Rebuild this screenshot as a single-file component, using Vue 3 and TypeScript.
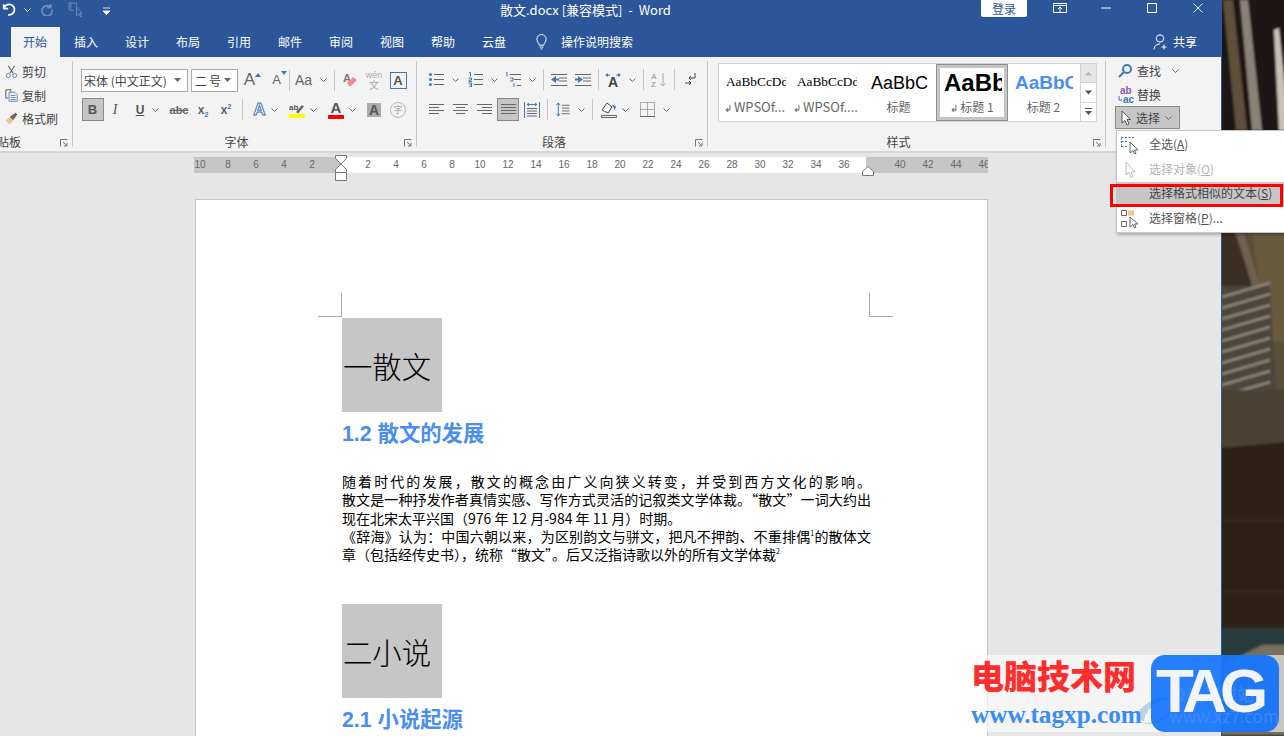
<template>
  <div class="screen">
    <div class="window">
      <!-- title bar -->
      <header class="titlebar">
        <div class="qat">
          <svg class="ic-undo" viewBox="0 0 16 14"><path d="M2 1v5h5M2.4 5.600A6 6 0 1 1 7 13" /></svg>
          <svg class="chev light qat-chev" viewBox="0 0 7 4"><path d="M.5.5l3 3 3-3" /></svg>
          <svg class="ic-redo" viewBox="0 0 14 14"><path d="M11 1v4H7M11 4.500A5.500 5.500 0 1 0 12.400 7" /></svg>
          <svg class="ic-touch" viewBox="0 0 17 17">
            <path d="M1 9V1h8v3M3 1v8h3" />
            <path class="fill" d="M9 5v10l2.500-2.500 2 3.500 1-.6-2-3.400H15z" />
          </svg>
          <svg class="ic-custom" viewBox="0 0 7 8"><path d="M0 1h7M0 4h7L3.500 7.500z" /></svg>
        </div>
        <div class="doc-title">散文.docx [兼容模式]&nbsp; -&nbsp; Word</div>
        <div class="win-ctrl">
          <button class="login">登录</button>
          <svg class="ctl first" viewBox="0 0 14 10"><path d="M.5.5h13v9H.5zM.5 2.500h13M7 9V4.500M5 6l2-2 2 2" /></svg>
          <svg class="ctl" viewBox="0 0 14 10"><path d="M2 5h10" /></svg>
          <svg class="ctl" viewBox="0 0 14 10"><path d="M2.500.5h9v9h-9z" /></svg>
          <svg class="ctl" viewBox="0 0 14 12"><path d="M1.500.5l11 11M12.500.5l-11 11" /></svg>
        </div>
      </header>

      <!-- tabs -->
      <nav class="tabs">
        <span v-for="(t, i) in tabs" :key="t" class="tab" :class="{ active: i === 0 }">{{ t }}</span>
        <svg class="bulb" viewBox="0 0 14 17"><path d="M4.500 12.500C4.500 10 2 9 2 6a5 5 0 0 1 10 0c0 3-2.500 4-2.500 6.500zM5 14.500h4M6 16.500h2" /></svg>
        <span class="search">操作说明搜索</span>
        <span class="share">
          <svg viewBox="0 0 16 17"><circle cx="7" cy="5" r="3.700" /><path d="M1 16c.5-4 3-5.500 6-5.500M11 11v5M8.500 13.500h5" /></svg>
          共享
        </span>
      </nav>

      <!-- ribbon -->
      <section class="ribbon">
        <div class="group g-clip">
          <div class="clip-row">
            <svg class="ic" viewBox="0 0 16 16">
              <path class="st-g" d="M4 1l6 9M12 1L6 10" />
              <circle class="st-b" cx="4" cy="13" r="2.500" /><circle class="st-b" cx="12" cy="13" r="2.500" />
            </svg>
            剪切
          </div>
          <div class="clip-row">
            <svg class="ic" viewBox="0 0 16 16">
              <path class="st-g" d="M1 1h6v2M1 1v10h3" />
              <path class="st-b" d="M5 4h7l3 3v8H5zM7 8h6M7 10.500h6M7 13h6" />
            </svg>
            复制
          </div>
          <div class="clip-row">
            <svg class="ic" viewBox="0 0 16 16">
              <path d="M1 10l5-4 4 5-4 4-2-1z" fill="#eec48a" />
              <path d="M6 6l7-5 2 2-5 7z" fill="#666" />
            </svg>
            格式刷
          </div>
          <div class="label clip-label">剪贴板</div>
          <svg class="launcher" viewBox="0 0 8 8"><path d="M.5 7.500v-7h7M3 3l4 4M7 4v3H4" /></svg>
        </div>

        <div class="group g-font">
          <div class="rows">
            <div class="row font-r1">
              <div class="select sel-font">宋体 (中文正文)<svg class="chev tri" viewBox="0 0 7 4"><path d="M0 0h7L3.500 4z" /></svg></div>
              <div class="select sel-size">二号<svg class="chev tri" viewBox="0 0 7 4"><path d="M0 0h7L3.500 4z" /></svg></div>
              <span class="glyph big">A<svg class="mini" viewBox="0 0 6 4"><path d="M3 0l3 4H0z" /></svg></span>
              <span class="glyph small">A<svg class="mini" viewBox="0 0 6 4"><path d="M0 0h6L3 4z" /></svg></span>
              <i class="sep" />
              <span class="drop"><span class="glyph aa">Aa</span><svg class="chev" viewBox="0 0 7 4"><path d="M.5.5l3 3 3-3" /></svg></span>
              <i class="sep" />
              <svg class="ic-16" viewBox="0 0 16 16">
                <text x="1" y="10" class="t-ic gray">A</text>
                <path d="M5 11l6-6 4 3-6 6H7z" fill="#ee8a98" />
              </svg>
              <span class="wen">wén<b>文</b></span>
              <span class="a-box">A</span>
            </div>
            <div class="row font-r2">
              <span class="toggle on fmt-b">B</span>
              <span class="fmt-i">I</span>
              <span class="drop"><span class="fmt-u">U</span><svg class="chev" viewBox="0 0 7 4"><path d="M.5.5l3 3 3-3" /></svg></span>
              <span class="fmt-s">abc</span>
              <span class="fmt-x">x<sub>2</sub></span>
              <span class="fmt-x">x<sup>2</sup></span>
              <i class="sep" />
              <span class="drop gap-5"><span class="glow">A</span><svg class="chev" viewBox="0 0 7 4"><path d="M.5.5l3 3 3-3" /></svg></span>
              <span class="drop gap-5">
                <svg class="ic-16" viewBox="0 0 16 16">
                  <text x="0" y="8" class="t-ic tiny">ab</text>
                  <path d="M7 10l6-7 2 1.500-6 7z" fill="#666" />
                  <rect y="12" width="16" height="4" fill="#ffff00" />
                </svg>
                <svg class="chev" viewBox="0 0 7 4"><path d="M.5.5l3 3 3-3" /></svg>
              </span>
              <span class="drop gap-5">
                <span class="color-a">A</span>
                <svg class="chev" viewBox="0 0 7 4"><path d="M.5.5l3 3 3-3" /></svg>
              </span>
              <span class="shade-a">A</span>
              <span class="zi">字</span>
            </div>
          </div>
          <div class="label">字体</div>
          <svg class="launcher" viewBox="0 0 8 8"><path d="M.5 7.500v-7h7M3 3l4 4M7 4v3H4" /></svg>
        </div>

        <div class="group g-para">
          <div class="rows">
            <div class="row para-r1">
              <span class="drop">
                <svg class="ic-15" viewBox="0 0 15 15">
                  <path class="st-d" d="M5 2.500h10M5 7.500h10M5 12.500h10" />
                  <circle cx="1.500" cy="2.500" r="1.500" fill="#3f78b8" /><circle cx="1.500" cy="7.500" r="1.500" fill="#3f78b8" /><circle cx="1.500" cy="12.500" r="1.500" fill="#3f78b8" />
                </svg>
                <svg class="chev" viewBox="0 0 7 4"><path d="M.5.5l3 3 3-3" /></svg>
              </span>
              <span class="drop">
                <svg class="ic-15" viewBox="0 0 15 15">
                  <path class="st-d" d="M6 2.500h9M6 7.500h9M6 12.500h9" />
                  <path class="st-b" d="M1 .5h1.500v4M.5 6h3v2H1v1.500h3M.5 11h3v4H.5M1.500 13h2" />
                </svg>
                <svg class="chev" viewBox="0 0 7 4"><path d="M.5.5l3 3 3-3" /></svg>
              </span>
              <span class="drop">
                <svg class="ic-16" viewBox="0 0 16 16">
                  <path class="st-d" d="M5 2.500h11M9 7.500h7M12 13.500h4" />
                  <path class="st-b" d="M1 .5h1v4M5 6h3v3H5M9 11v4" />
                </svg>
                <svg class="chev" viewBox="0 0 7 4"><path d="M.5.5l3 3 3-3" /></svg>
              </span>
              <i class="sep" />
              <svg class="ic-16" viewBox="0 0 16 16">
                <path class="st-d" d="M0 2.500h16M8 6h8M8 9h8M0 13.500h16" />
                <path d="M0 7.500L5 4v2.500h3v2H5V11z" fill="#3f78b8" />
              </svg>
              <svg class="ic-16" viewBox="0 0 16 16">
                <path class="st-d" d="M0 2.500h16M8 6h8M8 9h8M0 13.500h16" />
                <path d="M8 7.500L3 4v2.500H0v2h3V11z" fill="#3f78b8" />
              </svg>
              <i class="sep" />
              <span class="drop">
                <svg class="ic-16" viewBox="0 0 16 16">
                  <text x="3" y="15" class="t-ic dark">A</text>
                  <path class="st-b" d="M1 3h4M11 3h4" />
                  <path d="M0 3l3-2v4zM16 3l-3-2v4z" fill="#3f78b8" />
                </svg>
                <svg class="chev" viewBox="0 0 7 4"><path d="M.5.5l3 3 3-3" /></svg>
              </span>
              <i class="sep" />
              <svg class="ic-16" viewBox="0 0 16 16">
                <text x="0" y="7" class="t-ic mid">A</text><text x="0" y="15" class="t-ic mid">Z</text>
                <path class="st-l" d="M12 1v13M9.500 11.500L12 14l2.500-2.500" />
              </svg>
              <i class="sep" />
              <svg class="ic-12" viewBox="0 0 12 15">
                <path class="st-a" d="M11 1v5H5M7 4L5 6l2 2M1 11h6M5 9l2 2-2 2" />
              </svg>
            </div>
            <div class="row para-r2">
              <svg class="ic-15" viewBox="0 0 15 13"><path class="st-d" d="M0 1.500h15M0 4.500h10M0 7.500h15M0 10.500h10" /></svg>
              <svg class="ic-15" viewBox="0 0 15 13"><path class="st-d" d="M0 1.500h15M3 4.500h9M0 7.500h15M3 10.500h9" /></svg>
              <svg class="ic-15" viewBox="0 0 15 13"><path class="st-d" d="M0 1.500h15M5 4.500h10M0 7.500h15M5 10.500h10" /></svg>
              <span class="toggle on">
                <svg class="ic-15" viewBox="0 0 15 13"><path class="st-d" d="M0 1.500h15M0 4.500h15M0 7.500h15M0 10.500h15" /></svg>
              </span>
              <svg class="ic-16" viewBox="0 0 16 16">
                <path class="st-b" d="M.5 0v16M15.500 0v16M3 2.500h10M3 2.500l2-1.500M3 2.500l2 1.500M13 2.500l-2-1.500M13 2.500l-2 1.500" />
                <path class="st-d" d="M3 6.500h10M3 9h10M3 11.500h10M3 14h10" />
              </svg>
              <i class="sep" />
              <span class="drop">
                <svg class="ic-15" viewBox="0 0 15 16">
                  <path class="st-b" d="M3 1v14M1 3.500L3 1l2 2.500M1 12.500L3 15l2-2.500" />
                  <path class="st-d" d="M7 3.500h8M7 6.500h8M7 9.500h8M7 12.500h8" />
                </svg>
                <svg class="chev" viewBox="0 0 7 4"><path d="M.5.5l3 3 3-3" /></svg>
              </span>
              <i class="sep" />
              <span class="drop gap-5">
                <svg class="ic-16" viewBox="0 0 16 16">
                  <path class="st-k" d="M1 8l5-7 5 4-4 6z" />
                  <path d="M11 3l4 1-1 4z" fill="#3f78b8" />
                  <path class="st-d" d="M.5 13.500h15v2H.5z" />
                </svg>
                <svg class="chev" viewBox="0 0 7 4"><path d="M.5.5l3 3 3-3" /></svg>
              </span>
              <span class="drop">
                <svg class="ic-15" viewBox="0 0 15 15">
                  <path class="st-dot" d="M.5.5h14v14H.5zM7.500.5v14M.5 7.500h14" />
                  <path class="st-d" d="M0 14.500h15" />
                </svg>
                <svg class="chev" viewBox="0 0 7 4"><path d="M.5.5l3 3 3-3" /></svg>
              </span>
            </div>
          </div>
          <div class="label">段落</div>
          <svg class="launcher" viewBox="0 0 8 8"><path d="M.5 7.500v-7h7M3 3l4 4M7 4v3H4" /></svg>
        </div>

        <div class="group g-style">
          <div class="gallery">
            <div v-for="s in styles" :key="s.name" class="style-item" :class="[s.cls, { picked: s.picked }]">
              <div class="preview">{{ s.sample }}</div>
              <div class="style-name"><span v-if="s.mark" class="ret">↲</span>{{ s.name }}</div>
            </div>
            <div class="scroller">
              <span class="off"><svg class="mini2" viewBox="0 0 7 4"><path d="M3.500 0L7 4H0z" /></svg></span>
              <span><svg class="mini2" viewBox="0 0 7 4"><path d="M0 0h7L3.500 4z" /></svg></span>
              <span><svg class="mini2" viewBox="0 0 7 7"><path d="M0 0h7v1H0zM0 3h7L3.500 7z" /></svg></span>
            </div>
          </div>
          <div class="label">样式</div>
          <svg class="launcher" viewBox="0 0 8 8"><path d="M.5 7.500v-7h7M3 3l4 4M7 4v3H4" /></svg>
        </div>

        <div class="group g-edit">
          <div class="edit-row">
            <svg class="ic-16" viewBox="0 0 16 16">
              <circle class="st-b2" cx="10" cy="6" r="4" /><path class="st-b2" d="M7 9l-5 5" />
            </svg>
            <span>查找</span>
            <svg class="chev edit-chev" viewBox="0 0 7 4"><path d="M.5.5l3 3 3-3" /></svg>
          </div>
          <div class="edit-row">
            <svg class="ic-18" viewBox="0 0 18 18">
              <text x="3" y="8" class="t-ic rep purple">ab</text>
              <text x="6" y="17" class="t-ic rep blue">ac</text>
              <path class="st-b" d="M2 10v4h3" />
            </svg>
            <span>替换</span>
          </div>
          <div class="edit-row picked">
            <svg class="ic-cur" viewBox="0 0 10 16"><path d="M1 1v12l3-2.500 2 4.500 2-1-2-4.500h3.500z" /></svg>
            <span>选择</span>
            <svg class="chev" viewBox="0 0 7 4"><path d="M.5.5l3 3 3-3" /></svg>
          </div>
        </div>
      </section>

      <!-- document -->
      <main class="doc">
        <div class="ruler">
          <span v-for="(n, i) in rulerMarks" :key="i" class="mark">{{ n }}</span>
        </div>
        <article class="page">
          <i class="crop crop-l" />
          <i class="crop crop-r" />
          <div class="h1-box">一散文</div>
          <h2 class="h2">1.2 散文的发展</h2>
          <div class="para">
            <p class="full">随着时代的发展&#xFF0C;散文的概念由广义向狭义转变&#xFF0C;并受到西方文化的影响。</p>
            <p class="full">散文是一种抒发作者真情实感、写作方式灵活的记叙类文学体裁。“散文”一词大约出</p>
            <p>现在北宋太平兴国&#xFF08;976 年 12 月-984 年 11 月&#xFF09;时期。</p>
            <p class="full">《辞海》认为&#xFF1A;中国六朝以来&#xFF0C;为区别韵文与骈文&#xFF0C;把凡不押韵、不重排偶<sup>1</sup>的散体文</p>
            <p>章&#xFF08;包括经传史书&#xFF09;&#xFF0C;统称“散文”。后又泛指诗歌以外的所有文学体裁<sup>2</sup></p>
          </div>
          <div class="h1-box second">二小说</div>
          <h2 class="h2">2.1 小说起源</h2>
        </article>
      </main>
    </div>

    <!-- desktop wallpaper behind the window -->
    <svg class="wall" viewBox="0 0 62 736" preserveAspectRatio="none">
      <defs><filter id="soft"><feGaussianBlur stdDeviation="1" /></filter></defs>
      <g filter="url(#soft)">
        <rect x="-2" y="-2" width="66" height="740" fill="#2c2118" />
        <path d="M-2-2h66v240H-2z" fill="#1f1712" />
        <path d="M1 0h10l14 130H14z" fill="#5f4f3b" />
        <path d="M18 0h8l14 130H30z" fill="#8a8276" />
        <path d="M52 30l5-2 7 70v32h-7z" fill="#c7c2b4" />
        <path d="M-2 232h66v170H-2z" fill="#5b4d38" />
        <path d="M-2 232h14l20 54H-2z" fill="#3a2f22" />
        <path d="M14 232h8l16 54H30z" fill="#6c6250" />
        <path d="M30 232h34v110H46z" fill="#6b5a3c" />
        <path d="M-2 286h50l6 104H-2z" fill="#4c463c" />
        <path v-for="y in shutterLines" :key="y" :d="`M0 ${y + 5}L48 ${y - 9}`" stroke="#8f877a" stroke-width="2.500" fill="none" />
        <path d="M-2 390h66v58H-2z" fill="#4a4332" />
        <path d="M-2 448l66-6v192H-2z" fill="#2d2218" />
        <path d="M-2 520h66v2H-2zM-2 590h66v2H-2z" fill="#3a2c1e" />
        <path d="M-2 628h66v30H-2z" fill="#2a3a3c" />
        <path d="M0 665l40-20h24v90H-2z" fill="#75705f" />
      </g>
    </svg>

    <!-- ruler markers -->
    <svg class="indent" viewBox="0 0 12 26">
      <path d="M.5.5h11v3L6 9 11.500 14.500v3H.5v-3L6 9 .5 3.500z" fill="#fff" stroke="#777" />
      <path d="M.5 17.500h11v8H.5z" fill="#fff" stroke="#777" />
    </svg>
    <svg class="right-indent" viewBox="0 0 12 10"><path d="M6 .5l5.500 5v4H.5v-4z" fill="#fff" stroke="#777" /></svg>

    <!-- select dropdown -->
    <ul class="menu">
      <li>
        <svg viewBox="0 0 18 18">
          <path d="M.5 1.500h13M.5 1.500v9M.5 5.500h7M.5 10.500h6" fill="none" stroke="#3f78b8" stroke-dasharray="2 1.500" />
          <path d="M9 6v11l3-2.500 1.500 3.500 1.500-.7-1.500-3.300H17z" fill="#fff" stroke="#666" />
        </svg>
        全选(<u>A</u>)
      </li>
      <li class="disabled">
        <svg viewBox="0 0 18 18"><path d="M5 1v13l3-2.500 2 5 2-1-2-4.500h4z" fill="#fff" stroke="#bbb" /></svg>
        选择对象(<u>O</u>)
      </li>
      <li class="current">选择格式相似的文本(<u>S</u>)</li>
      <li>
        <svg viewBox="0 0 18 18">
          <path d="M.5.5h5v5h-5zM.5 11.500h5v5h-5z" fill="none" stroke="#666" />
          <path d="M7 .5h6v5H7z" fill="#eec48a" />
          <path d="M9 7v10l3-2.500 1.500 3.500 1.500-.7-1.500-3.300H17z" fill="#fff" stroke="#666" />
        </svg>
        选择窗格(<u>P</u>)...
      </li>
    </ul>
    <div class="callout" />

    <!-- site watermark -->
    <div class="watermark">
      <svg class="wm-swirl" viewBox="0 0 40 34">
        <path d="M2 26C6 10 24 2 38 6 26 6 12 14 10 28z" fill="#bcd3e6" />
        <path d="M8 30c12 4 26-2 30-14-6 8-18 14-30 14z" fill="#cfe0b8" />
      </svg>
      <div class="wm-text">
        <div class="wm-cn">电脑技术网</div>
        <div class="wm-url">www.tagxp.com</div>
      </div>
      <div class="wm-badge">
        <span class="wm-ghost">极光下载站<br />www.xz7.com</span>
        <span class="wm-tag">TAG</span>
      </div>
    </div>
  </div>
</template>

<script setup lang="ts">
interface StyleItem {
  name: string
  sample: string
  cls: string
  mark?: boolean
  picked?: boolean
}

const tabs = ['开始', '插入', '设计', '布局', '引用', '邮件', '审阅', '视图', '帮助', '云盘']

const styles: StyleItem[] = [
  { name: 'WPSOf...', sample: 'AaBbCcDd', cls: 's-plain', mark: true },
  { name: 'WPSOf....', sample: 'AaBbCcDd', cls: 's-plain', mark: true },
  { name: '标题', sample: 'AaBbC', cls: 's-title' },
  { name: '标题 1', sample: 'AaBb', cls: 's-h1', mark: true, picked: true },
  { name: '标题 2', sample: 'AaBbC', cls: 's-h2' },
]

// 0 sits at the left margin, every 2 units is 28px
const rulerMarks: (number | string)[] = [10, 8, 6, 4, 2, '']
for (let n = 2; n <= 46; n += 2) {
  if (n === 38) rulerMarks.push('')
  else rulerMarks.push(n)
}

const shutterLines = Array.from({ length: 10 }, (_, i) => 292 + i * 11)
</script>

<style scoped>
.screen {
  position: relative;
  display: flex;
  width: 1284px;
  height: 736px;
  overflow: hidden;
  font-family: 'Noto Sans CJK SC', 'Liberation Sans', sans-serif;
  font-size: 12px;
  color: #444;
}

.window {
  display: flex;
  flex-direction: column;
  width: 1222px;
  height: 736px;
  flex-shrink: 0;
  border-right: 1px solid #2b579a;
  box-sizing: border-box;
  background: #e6e6e6;
}

.wall {
  width: 62px;
  height: 736px;
  flex-shrink: 0;
}

/* title bar */
.titlebar {
  display: flex;
  height: 27px;
  flex-shrink: 0;
  background: #2b579a;
  color: #fff;
}

.qat {
  display: flex;
  align-items: flex-start;
  width: 500px;
  flex-shrink: 0;
  padding: 3px 0 0 2px;
  box-sizing: border-box;
}

.ic-undo {
  width: 14px;
  height: 13px;
  fill: none;
  stroke: #fff;
  stroke-width: 2;
}

.qat-chev {
  margin: 5px 0 0 8px;
}

.ic-redo {
  width: 14px;
  height: 13px;
  margin-left: 9px;
  fill: none;
  stroke: #6f8cb8;
  stroke-width: 2;
}

.ic-touch {
  width: 16px;
  height: 16px;
  margin: -1px 0 0 14px;
  fill: none;
  stroke: #6f8cb8;
}

.ic-touch .fill {
  fill: #2b579a;
}

.ic-custom {
  width: 7px;
  height: 8px;
  margin: 4px 0 0 19px;
  fill: #fff;
  stroke: #fff;
  stroke-width: 0.8;
}

.doc-title {
  font-size: 13px;
  line-height: 19px;
  white-space: nowrap;
}

.win-ctrl {
  display: flex;
  align-items: flex-start;
  margin-left: auto;
  padding-right: 16px;
}

.login {
  width: 46px;
  height: 17px;
  padding: 0;
  border: 0;
  border-radius: 0 0 2px 2px;
  background: #fff;
  color: #2b579a;
  font: 12px/17px 'Noto Sans CJK SC', sans-serif;
}

.ctl {
  width: 14px;
  height: 10px;
  flex-shrink: 0;
  margin: 3px 0 0 32px;
  fill: none;
  stroke: #fff;
}

.ctl.first {
  margin-left: 26px;
}

/* tabs */
.tabs {
  display: flex;
  align-items: stretch;
  height: 30px;
  flex-shrink: 0;
  padding-left: 9.500px;
  background: #2b579a;
  color: #fff;
  line-height: 30px;
}

.tab {
  width: 51px;
  padding: 0 1px;
  box-sizing: border-box;
  background-clip: content-box;
  text-align: center;
}

.tab.active {
  background-color: #f3f3f3;
  color: #2b579a;
}

.bulb {
  width: 13px;
  height: 17px;
  margin: 6px 0 0 15.500px;
  fill: none;
  stroke: #fff;
}

.search {
  margin-left: 13px;
}

.share {
  display: flex;
  align-items: center;
  gap: 4px;
  margin-left: auto;
  padding-right: 24px;
}

.share svg {
  width: 16px;
  height: 18px;
  fill: none;
  stroke: #fff;
}

/* ribbon */
.ribbon {
  display: flex;
  height: 96px;
  flex-shrink: 0;
  padding: 4px 0;
  box-sizing: border-box;
  background: #f3f3f3;
  border-bottom: 2px solid #d6d6d6;
}

.group {
  position: relative;
  flex-shrink: 0;
  box-sizing: border-box;
  border-right: 1px solid #c6c6c6;
}

.g-clip {
  width: 73px;
  padding-left: 5px;
}

.g-font {
  width: 344px;
  padding: 7px 0 0 8px;
}

.g-para {
  width: 291px;
  padding: 7px 0 0 5px;
}

.g-style {
  width: 398px;
  padding: 2px 0 0 10px;
}

.g-edit {
  flex: 1;
  padding-left: 9px;
  border-right: 0;
}

.label {
  position: absolute;
  left: 0;
  right: 16px;
  bottom: -3px;
  text-align: center;
  line-height: 17px;
  color: #444;
}

.clip-label {
  left: -15px;
  right: auto;
}

.launcher {
  position: absolute;
  right: 4px;
  bottom: 0;
  width: 8px;
  height: 8px;
  fill: none;
  stroke: #777;
}

.clip-row {
  display: flex;
  align-items: center;
  gap: 4px;
  height: 23.500px;
}

.clip-row:first-child {
  margin-top: -1px;
}

.ic {
  width: 13px;
  height: 15px;
  fill: none;
}

.st-g {
  fill: none;
  stroke: #666;
  stroke-width: 1.300;
}

.st-b {
  fill: none;
  stroke: #3f78b8;
}

.st-b2 {
  fill: none;
  stroke: #3f78b8;
  stroke-width: 2;
}

.st-d {
  fill: none;
  stroke: #666;
}

.st-l {
  fill: none;
  stroke: #aaa;
}

.st-a {
  fill: none;
  stroke: #444;
}

.st-k {
  fill: #fff;
  stroke: #444;
}

.st-dot {
  fill: none;
  stroke: #666;
  stroke-dasharray: 1 1;
}

.rows {
  display: flex;
  flex-direction: column;
  gap: 7px;
}

.row {
  display: grid;
  align-items: center;
  justify-items: center;
  height: 23px;
}

.font-r1 {
  grid-template-columns: 108px 49px 27px 23px 3px 40px 6px 25px 24px 24px;
}

.font-r2 {
  grid-template-columns: 23px 22px 43px 20px 28px 18px 14px 33px 42px 36px 28px 20px;
}

.para-r1 {
  grid-template-columns: 43px 35px 40px 6px 25px 24px 7px 36px 10px 22px 8px 24px;
}

.para-r2 {
  grid-template-columns: 24px 24px 24px 24px 24px 6px 39px 6px 40px 39px;
  margin-left: 2px;
}

.sep {
  display: block;
  width: 1px;
  height: 21px;
  background: #c6c6c6;
}

.select {
  display: flex;
  align-items: center;
  justify-content: space-between;
  height: 23px;
  padding: 0 6px 0 2px;
  box-sizing: border-box;
  border: 1px solid #ababab;
  background: #fff;
  white-space: nowrap;
  color: #444;
}

.sel-font {
  width: 107px;
  justify-self: start;
}

.sel-size {
  width: 47px;
  justify-self: end;
  padding-left: 3px;
  letter-spacing: 2px;
}

.chev {
  width: 7px;
  height: 4px;
  flex-shrink: 0;
  fill: none;
  stroke: #666;
}

.chev.light {
  stroke: #fff;
}

.chev.tri {
  fill: #666;
  stroke: none;
}

.drop {
  display: inline-flex;
  align-items: center;
  gap: 8px;
}

.gap-5 {
  gap: 5px;
}

.ic-15 {
  width: 15px;
  height: 15px;
}

.ic-16 {
  width: 16px;
  height: 16px;
}

.ic-18 {
  width: 18px;
  height: 18px;
}

.ic-12 {
  width: 12px;
  height: 15px;
}

.t-ic {
  font-family: 'Liberation Sans', sans-serif;
  font-weight: 700;
}

.t-ic.gray {
  font-size: 11px;
  fill: #777;
}

.t-ic.tiny {
  font-size: 8px;
  fill: #555;
}

.t-ic.dark {
  font-size: 14px;
  fill: #444;
}

.t-ic.mid {
  font-size: 8px;
  fill: #aaa;
}

.t-ic.rep {
  font-size: 10px;
}

.t-ic.purple {
  fill: #8a5aa8;
}

.t-ic.blue {
  fill: #3f78b8;
}

.glyph {
  position: relative;
  display: inline-block;
  font-family: 'Liberation Sans', sans-serif;
  color: #666;
}

.glyph.big {
  left: -2px;
  font-size: 17px;
}

.glyph.small {
  font-size: 13px;
  line-height: 24px;
}

.glyph.aa {
  font-size: 14px;
}

.mini {
  position: absolute;
  top: 3px;
  right: -6px;
  width: 6px;
  height: 4px;
  fill: #3f78b8;
}

.wen {
  display: flex;
  flex-direction: column;
  align-items: center;
  font: 9px/9px 'Liberation Sans', sans-serif;
  color: #aaa;
}

.wen b {
  font-family: 'Noto Sans CJK SC', sans-serif;
  font-weight: 400;
  font-size: 10px;
  line-height: 9px;
}

.a-box {
  width: 15px;
  height: 15px;
  border: 1px solid #3f78b8;
  text-align: center;
  font: 700 13px/15px 'Liberation Sans', sans-serif;
  color: #555;
}

.toggle {
  display: flex;
  align-items: center;
  justify-content: center;
  width: 22px;
  height: 23px;
  box-sizing: border-box;
  border: 1px solid transparent;
}

.toggle.on {
  background: #c6c6c6;
  border-color: #8a8a8a;
}

.fmt-b {
  font: 700 13px 'Liberation Sans', sans-serif;
  color: #555;
}

.fmt-i {
  font: italic 400 14px 'Liberation Serif', serif;
  color: #555;
}

.fmt-u {
  font: 700 12px 'Liberation Sans', sans-serif;
  text-decoration: underline;
  color: #555;
}

.fmt-s {
  font: 700 11px 'Liberation Sans', sans-serif;
  text-decoration: line-through;
  color: #666;
}

.fmt-x {
  font: 700 12px/14px 'Liberation Sans', sans-serif;
  color: #666;
}

.fmt-x sub,
.fmt-x sup {
  font-size: 7px;
  line-height: 0;
  color: #3f78b8;
}

.glow {
  font: 700 17px/20px 'Liberation Sans', sans-serif;
  color: #fff;
  -webkit-text-stroke: 1px #3f78b8;
}

.color-a {
  width: 16px;
  text-align: center;
  font: 700 15px/14px 'Liberation Sans', sans-serif;
  color: #555;
  border-bottom: 4px solid #f00;
}

.shade-a {
  width: 14px;
  height: 14px;
  background: #ababab;
  text-align: center;
  font: 700 14px/14px 'Liberation Sans', sans-serif;
  color: #555;
}

.zi {
  width: 14px;
  height: 14px;
  border: 1px solid #bbb;
  border-radius: 50%;
  text-align: center;
  font-size: 9px;
  line-height: 14px;
  color: #aaa;
}

/* styles gallery */
.gallery {
  display: flex;
  width: 379px;
  height: 59px;
  box-sizing: border-box;
  border: 1px solid #d4d4d4;
  background: #fff;
}

.style-item {
  width: 71px;
  flex-shrink: 0;
  padding-top: 7px;
  box-sizing: border-box;
  overflow: hidden;
  text-align: center;
}

.s-title {
  width: 75px;
}

.preview {
  height: 28px;
  overflow: hidden;
  padding-left: 7px;
  text-align: left;
  color: #000;
  white-space: nowrap;
  line-height: 28px;
}

.s-plain .preview {
  width: 60px;
  font: 13.300px/22px 'Liberation Serif', serif;
}

.s-plain .style-name {
  font-size: 13px;
}

.s-title .preview {
  padding-left: 10px;
  font: 18px/24px 'Liberation Sans', sans-serif;
}

.s-h1 .preview {
  padding-left: 7px;
  width: 58px;
  font: 700 24px/24px 'Liberation Sans', sans-serif;
}

.s-h2 .preview {
  padding-left: 7px;
  width: 58px;
  font: 700 19px/24px 'Liberation Sans', sans-serif;
  color: #4a8ff0;
}

.style-name {
  color: #666;
  line-height: 16px;
  white-space: nowrap;
}

.ret {
  margin-right: 2px;
  font-size: 10px;
}

.style-item.picked {
  width: 72px;
  padding-top: 6px;
  border: 1px solid #8f8f8f;
  box-shadow: inset 0 0 0 3px #c6c6c6;
}

.scroller {
  display: flex;
  flex-direction: column;
  width: 15px;
  margin-left: auto;
  flex-shrink: 0;
  border-left: 1px solid #d4d4d4;
}

.scroller span {
  display: flex;
  flex: 1;
  align-items: center;
  justify-content: center;
  border-bottom: 1px solid #d4d4d4;
}

.scroller span:last-child {
  border-bottom: 0;
}

.scroller .off {
  background: #e6e6e6;
}

.mini2 {
  width: 7px;
  height: 7px;
  fill: #555;
}

.off .mini2 {
  fill: #bbb;
}

/* editing group */
.edit-row {
  display: flex;
  align-items: center;
  gap: 4px;
  width: 65px;
  height: 23px;
  padding-left: 2px;
  box-sizing: border-box;
  white-space: nowrap;
}

.edit-row:first-child {
  margin-top: -2px;
}

.edit-row:nth-child(2) {
  margin-top: 1px;
  gap: 2px;
}

.edit-chev {
  margin-left: 7px;
}

.edit-row.picked {
  margin-top: 0;
  gap: 5px;
  padding-left: 5px;
  background: #c6c6c6;
  border: 1px solid #8a8a8a;
}

.ic-cur {
  width: 10px;
  height: 16px;
  fill: #fff;
  stroke: #555;
}

/* document */
.doc {
  flex: 1;
  min-height: 0;
  overflow: hidden;
  padding: 4px 0 0 194px;
}

.ruler {
  display: flex;
  width: 794px;
  height: 16px;
  overflow: hidden;
  /* gray margins left and right of the text area */
  background: linear-gradient(90deg, #c6c6c6 146px, #fff 146px, #fff 672px, #c6c6c6 672px);
}

.mark {
  width: 28px;
  flex-shrink: 0;
  text-align: center;
  font: 10px/16px 'Liberation Sans', sans-serif;
  color: #666;
}

.mark:first-child {
  margin-left: -8px;
}

.page {
  position: relative;
  width: 793px;
  height: 800px;
  margin: 26px 0 0 1px;
  padding: 118px 0 0 146px;
  box-sizing: border-box;
  border: 1px solid #c6c6c6;
  background: #fff;
  color: #000;
}

.crop {
  position: absolute;
  top: 93px;
  width: 23px;
  height: 23px;
  border-bottom: 1px solid #aaa;
}

.crop-l {
  left: 122px;
  border-right: 1px solid #aaa;
}

.crop-r {
  left: 673px;
  border-left: 1px solid #aaa;
}

.h1-box {
  display: flex;
  align-items: center;
  width: 100px;
  height: 94px;
  padding-left: 1px;
  box-sizing: border-box;
  background: #c6c6c6;
  font-family: 'Liberation Serif', 'Noto Sans CJK SC', serif;
  font-size: 29.330px;
  font-weight: 300;
  color: #000;
}

.h1-box.second {
  margin-top: 40.500px;
}

.h2 {
  margin: 7px 0 23px;
  font: 700 21.330px/30px 'Liberation Sans', 'Noto Sans CJK SC', sans-serif;
  color: #4a8ff0;
}

.para {
  width: 529px;
  font: 14px/18.300px 'Noto Sans CJK SC', 'Liberation Serif', sans-serif;
  color: #000;
}

.para p {
  margin: 0;
  white-space: nowrap;
}

.para p.full {
  white-space: normal;
  text-align: justify;
  text-align-last: justify;
}

.para sup {
  font-size: 7px;
  line-height: 0;
}

/* overlays */
.indent {
  position: absolute;
  left: 335px;
  top: 155px;
  width: 12px;
  height: 26px;
}

.right-indent {
  position: absolute;
  left: 862px;
  top: 166px;
  width: 12px;
  height: 10px;
}

.menu {
  position: absolute;
  left: 1116px;
  top: 130px;
  width: 180px;
  height: 103px;
  margin: 0;
  padding: 2px 0;
  box-sizing: border-box;
  list-style: none;
  background: #fff;
  border: 1px solid #c6c6c6;
  box-shadow: 1px 2px 3px rgba(0, 0, 0, 0.25);
}

.menu li {
  position: relative;
  height: 24.500px;
  padding-left: 32px;
  line-height: 22.500px;
  white-space: nowrap;
  color: #555;
}

.menu li svg {
  position: absolute;
  left: 4px;
  top: 3px;
  width: 18px;
  height: 18px;
}

.menu li.disabled {
  color: #b5b5b5;
}

.menu li.current {
  background: #c6c6c6;
  color: #444;
}

.callout {
  position: absolute;
  left: 1110px;
  top: 184px;
  width: 173px;
  height: 23px;
  box-sizing: border-box;
  border: 3px solid #f00;
}

.watermark {
  position: absolute;
  left: 970px;
  top: 655px;
  display: flex;
  width: 314px;
  height: 77px;
  background: linear-gradient(90deg, transparent 17px, rgba(255, 255, 255, 0.6) 17px);
}

.wm-swirl {
  position: absolute;
  left: 164px;
  top: 38px;
  width: 40px;
  height: 34px;
}

.wm-text {
  position: relative;
  width: 180px;
  flex-shrink: 0;
  padding-left: 1px;
}

.wm-cn {
  margin-top: 1px;
  font: 900 33px/38px 'Noto Sans CJK SC', sans-serif;
  color: #ff2d2d;
  white-space: nowrap;
}

.wm-url {
  margin-top: 7px;
  font: 700 25.200px/28px 'Liberation Serif', serif;
  color: #3a8df5;
  white-space: nowrap;
}

.wm-badge {
  position: relative;
  width: 128px;
  height: 77px;
  overflow: hidden;
  border-radius: 14px;
  background: rgba(0, 105, 255, 0.85);
}

.wm-tag {
  position: relative;
  display: block;
  padding-left: 5px;
  font: 700 62px/72px 'Liberation Sans', sans-serif;
  letter-spacing: -7px;
  color: #f2f4f7;
}

.wm-ghost {
  position: absolute;
  left: 18px;
  top: 28px;
  font: 400 17px/22px 'Noto Sans CJK SC', sans-serif;
  color: rgba(70, 140, 245, 0.8);
  white-space: nowrap;
}
</style>

<style>
html,
body {
  margin: 0;
  background: #e6e6e6;
}
</style>
